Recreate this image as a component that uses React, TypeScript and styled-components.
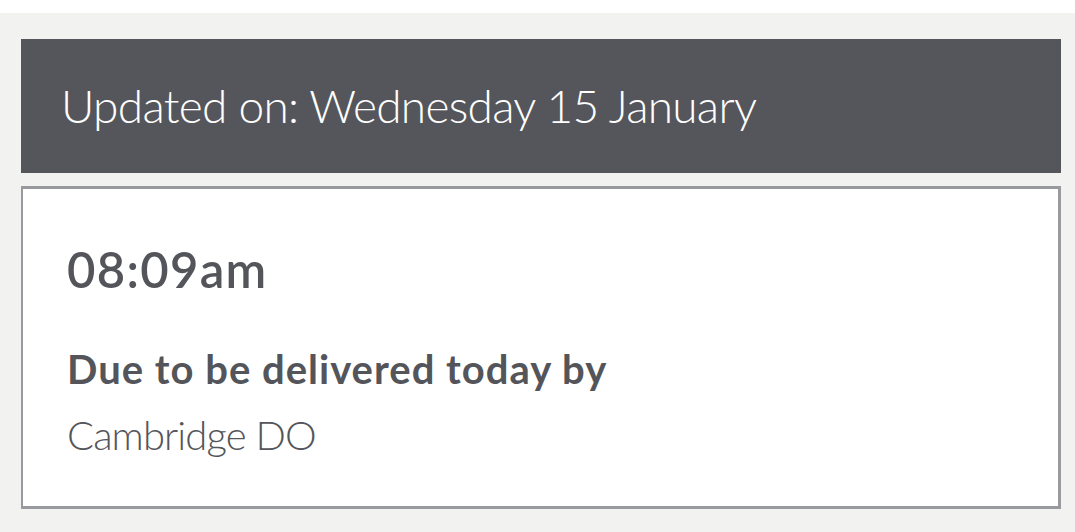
import React from "react";
import styled, { createGlobalStyle } from "styled-components";

const Global = createGlobalStyle`
  html, body { margin: 0; padding: 0; background: #ffffff; }
  body { font-family: Lato, "Open Sans", sans-serif; }
`;

const Page = styled.div`
  margin-top: 13px;
  background: #f2f2f0;
  padding: 26px 14px 25px 21px;
  display: flex;
  flex-direction: column;
  gap: 13px;
`;

const Header = styled.div`
  height: 134px;
  background: #55565b;
  display: flex;
  align-items: center;
  padding-left: 40px;
  box-sizing: border-box;
`;

const HeaderTitle = styled.h2`
  margin: 0;
  color: #ffffff;
  font-family: Lato, sans-serif;
  font-weight: 300;
  font-size: 46px;
  letter-spacing: -0.7px;
  line-height: 1;
`;

const Card = styled.div`
  background: #ffffff;
  border-style: solid;
  border-color: #999a9d;
  border-width: 3px 3px 3px 2px;
  padding: 50px 44px 43px 44px;
  display: flex;
  flex-direction: column;
  color: #54555a;
`;

const Time = styled.div`
  font-family: Lato, sans-serif;
  font-weight: 600;
  font-size: 49px;
  letter-spacing: 1.3px;
  line-height: 60px;
`;

const Label = styled.div<{ $bold?: boolean }>`
  font-family: Lato, sans-serif;
  font-weight: ${(p) => (p.$bold ? 700 : 300)};
  font-size: 40px;
  letter-spacing: ${(p) => (p.$bold ? "1px" : "-0.9px")};
  line-height: 56px;
  margin-top: ${(p) => (p.$bold ? "42px" : "10px")};
`;

export default function App() {
  return (
    <>
      <Global />
      <Page>
        <Header>
          <HeaderTitle>Updated on: Wednesday 15 January</HeaderTitle>
        </Header>
        <Card>
          <Time>08:09am</Time>
          <Label $bold>Due to be delivered today by</Label>
          <Label>Cambridge DO</Label>
        </Card>
      </Page>
    </>
  );
}
